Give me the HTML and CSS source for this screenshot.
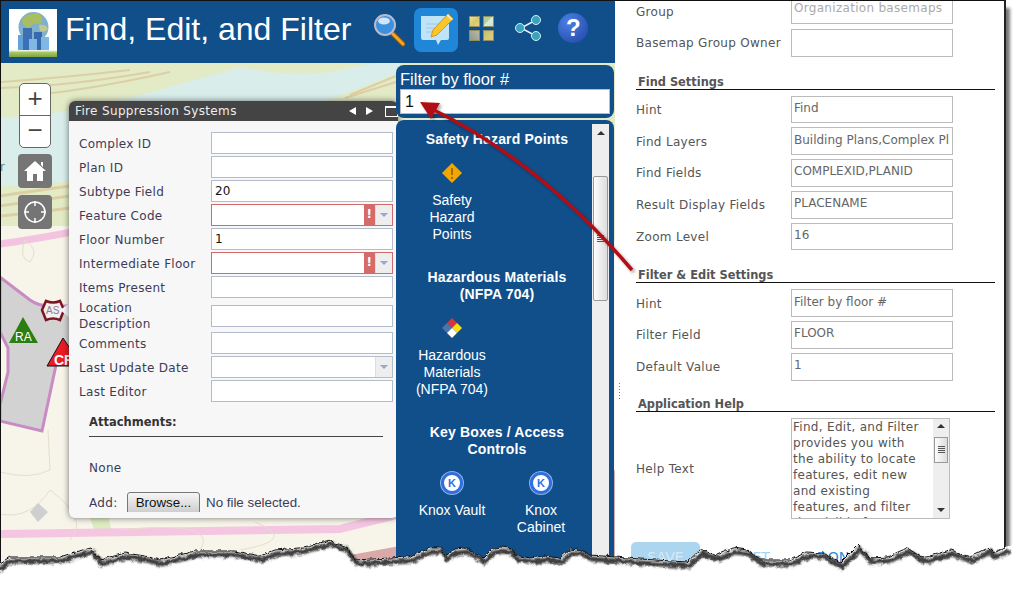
FILE: index.html
```html
<!DOCTYPE html>
<html lang="en">
<head>
    <meta charset="UTF-8">
    <title>Find, Edit, and Filter</title>
    <link rel="stylesheet" href="styles.css">
</head>
<body>
<div class="shot">
    <div class="app">
        <header class="app-header">
            <svg class="logo" width="48" height="48" viewBox="0 0 48 48">
                <defs>
                    <linearGradient id="grass" x1="0" y1="0" x2="0" y2="1">
                        <stop offset="0" stop-color="#fff"/>
                        <stop offset="0.35" stop-color="#a8c76a"/>
                        <stop offset="1" stop-color="#7fa63a"/>
                    </linearGradient>
                </defs>
                <rect width="48" height="48" fill="#fff"/>
                <circle cx="24.500" cy="18" r="15" fill="#7fb0cc"/>
                <path d="M13 10 Q20 3 30 4 Q36 10 31 15 Q24 13 20 19 Q13 18 13 10Z" fill="#a9bd62"/>
                <path d="M30 16 Q37 15 39 20 Q36 24 31 22Z" fill="#c3c98a"/>
                <rect x="9" y="26" width="8" height="15" fill="#62a3dc"/>
                <rect x="14" y="19" width="9" height="22" fill="#3d6fb5"/>
                <rect x="25" y="23" width="8" height="18" fill="#3868ae"/>
                <rect x="20" y="30" width="8" height="11" fill="#7fb8e4"/>
                <rect x="32" y="28" width="8" height="13" fill="#7fb8e4"/>
                <rect y="41" width="48" height="7" fill="url(#grass)"/>
            </svg>
            <h1 class="app-title">Find, Edit, and Filter</h1>
            <div class="tools">
                <svg class="tool-search" width="34" height="36" viewBox="0 0 34 36">
                    <line x1="20" y1="21" x2="30" y2="31" stroke="#8a5a20" stroke-width="5" stroke-linecap="round"/>
                    <line x1="20" y1="21" x2="30" y2="31" stroke="#f5a623" stroke-width="3" stroke-linecap="round"/>
                    <circle cx="12" cy="12" r="10" fill="#3d8fe0" stroke="#b9bcc8" stroke-width="2"/>
                    <ellipse cx="11" cy="8" rx="6" ry="3.500" fill="#cfe6fb"/>
                </svg>
                <div class="tool-active">
                    <svg width="36" height="36" viewBox="0 0 36 36">
                        <path d="M2 4 H28 Q30 4 30 6 V26 Q30 28 28 28 H22 L19 33 L17 28 H4 Q2 28 2 26Z" fill="#bfe4f8"/>
                        <path d="M7 12 H20 M7 16 H17 M7 20 H14" stroke="#9cc8e4" stroke-width="1"/>
                        <path d="M12 25 L14 18 L29 2 L34 7 L18 23Z" fill="#f8c52c" stroke="#d89a14" stroke-width="1"/>
                        <path d="M29 2 L34 7 L32.500 8.500 L27.500 3.500Z" fill="#f4e7c0"/>
                    </svg>
                </div>
                <div class="tool-tiles">
                    <span class="tile tile-a"></span><span class="tile tile-b"></span>
                    <span class="tile tile-c"></span><span class="tile tile-d"></span>
                </div>
                <svg class="tool-share" width="28" height="32" viewBox="0 0 28 32">
                    <path d="M21 7 L6 15 L21 23" stroke="#e8f2f6" stroke-width="1.500" fill="none"/>
                    <circle cx="21" cy="7" r="4.500" fill="#36a3bf" stroke="#d8eef4"/>
                    <circle cx="5" cy="15" r="4.500" fill="#36a3bf" stroke="#d8eef4"/>
                    <circle cx="21" cy="23" r="4.500" fill="#36a3bf" stroke="#d8eef4"/>
                </svg>
                <div class="tool-help">?</div>
            </div>
        </header>

        <div class="map">
            <svg class="basemap" viewBox="1 63 614 520" width="614" height="520">
                <rect x="0" y="60" width="620" height="530" fill="#f7f4ea"/>
                <path d="M0 60 H620 V240 H0Z" fill="#e3ebc6"/>
                <path d="M0 118 L60 112 L133 97 L242 67 Q290 78 330 72 L375 63 H400 V72 L337 97 L200 150 L69 182 L0 186Z" fill="#d9edea"/>
                <path d="M0 82 Q60 78 130 70 M0 88 Q70 86 150 72 M20 96 Q80 92 170 72 M350 95 L396 76 M345 98 L396 82" stroke="#dccfa6" stroke-width="2" fill="none"/>
                <path d="M0 196 Q40 190 70 186 M0 206 Q40 200 70 196 M0 216 Q40 212 70 208" stroke="#dccfa6" stroke-width="3" fill="none"/>
                <rect x="0" y="226" width="70" height="50" fill="#f7f4ea"/>
                <path d="M0 244 Q30 240 72 232" stroke="#f3c3e0" stroke-width="7" fill="none"/>
                <path d="M25 240 Q40 250 30 262 Q18 258 25 240Z" fill="none" stroke="#e4dfcc"/>
                <path d="M0 277 L30 300 Q38 306 50 306 H75 V340 L56 365 L42 431 L0 421 V405 L8 372 V348 L0 332Z" fill="#d2d2d2" stroke="#c88bc3" stroke-width="3"/>
                <path d="M90 518 L108 516 L112 532 L96 534Z" fill="#dcebc0"/>
                <path d="M0 534 L340 529 L400 514" stroke="#f5c6e2" stroke-width="8" fill="none"/>
                <path d="M0 472 Q30 480 50 470 L48 430 M0 514 Q30 520 50 490 Q90 520 70 540 M120 530 Q220 520 200 550 M255 522 Q300 540 240 550" stroke="#e4dfcc" fill="none"/>
                <path d="M345 556 L400 546 V565 H350Z" fill="#d9a8a8"/>
                <path d="M400 546 L616 470 V570 H400Z" fill="#d9a8a8"/>
                <path d="M30 512 L38 503 L48 512 L38 522Z" fill="#cfcfcf"/>
                <path d="M42 310 L46 301 Q53 304 60 301 L64 310 L60 320 Q53 317 46 320Z" fill="#f4eef0" stroke="#7a1620" stroke-width="2.500"/>
                <text x="46" y="314" class="map-as">AS</text>
                <path d="M60 310 L70 303 V318Z" fill="#f7f7f7"/>
                <path d="M23 317 L38 343 H9Z" fill="#2e7d10"/>
                <text x="15" y="341" class="map-ra">RA</text>
                <path d="M63 338 L82 366 H47Z" fill="#ea1c24" stroke="#111"/>
                <text x="54" y="365" class="map-cr">CR</text>
                <text x="0" y="171" class="map-label">r</text>
            </svg>

            <div class="zoom-ctl">
                <div class="zoom-btn">+</div>
                <div class="zoom-btn">&minus;</div>
            </div>
            <div class="map-btn map-btn-home">
                <svg width="24" height="22" viewBox="0 0 24 22">
                    <path d="M12 1 L23 11 H20 V21 H14 V14 H10 V21 H4 V11 H1Z M18 2 H20 V7 L18 5Z" fill="#fff"/>
                </svg>
            </div>
            <div class="map-btn map-btn-locate">
                <svg width="24" height="24" viewBox="0 0 24 24">
                    <circle cx="12" cy="12" r="10" fill="none" stroke="#fff" stroke-width="1.500"/>
                    <path d="M12 1 V6 M12 18 V23 M1 12 H6 M18 12 H23" stroke="#fff" stroke-width="1.500"/>
                </svg>
            </div>

            <section class="dialog">
                <div class="dialog-title">
                    <span class="dialog-name">Fire Suppression Systems</span>
                    <span class="arrow-left"></span>
                    <span class="arrow-right"></span>
                    <span class="maximize"></span>
                </div>
                <div class="dialog-body">
                    <div class="field"><label>Complex ID</label><input type="text"></div>
                    <div class="field"><label>Plan ID</label><input type="text"></div>
                    <div class="field"><label>Subtype Field</label><input type="text" value="20"></div>
                    <div class="field">
                        <label>Feature Code</label>
                        <div class="combo combo-error"><span class="combo-text"></span><span class="combo-warn">!</span><span class="combo-arrow"></span></div>
                    </div>
                    <div class="field"><label>Floor Number</label><input type="text" value="1"></div>
                    <div class="field">
                        <label>Intermediate Floor</label>
                        <div class="combo combo-error"><span class="combo-text"></span><span class="combo-warn">!</span><span class="combo-arrow"></span></div>
                    </div>
                    <div class="field"><label>Items Present</label><input type="text"></div>
                    <div class="field field-tall"><label>Location Description</label><input type="text"></div>
                    <div class="field"><label>Comments</label><input type="text"></div>
                    <div class="field">
                        <label>Last Update Date</label>
                        <div class="combo"><span class="combo-text"></span><span class="combo-arrow"></span></div>
                    </div>
                    <div class="field"><label>Last Editor</label><input type="text"></div>

                    <div class="attachments">
                        <div class="attach-title">Attachments:</div>
                        <div class="attach-none">None</div>
                        <div class="attach-add">
                            <span class="attach-label">Add:</span>
                            <button class="browse" type="button">Browse...</button>
                            <span class="attach-file">No file selected.</span>
                        </div>
                    </div>
                </div>
            </section>

            <div class="filter-box">
                <label class="filter-label">Filter by floor #</label>
                <input class="filter-input" type="text" value="1">
            </div>

            <aside class="template-panel">
                <div class="template-list">
                    <div class="group">
                        <h3>Safety Hazard Points</h3>
                        <div class="items">
                            <div class="item">
                                <svg width="22" height="22" viewBox="0 0 22 22">
                                    <path d="M11 1 L21 11 L11 21 L1 11Z" fill="#f5a500"/>
                                    <path d="M11 6 V13 M11 15 V17" stroke="#6b4a00" stroke-width="1.200"/>
                                </svg>
                                <span>Safety Hazard Points</span>
                            </div>
                        </div>
                    </div>
                    <div class="group">
                        <h3>Hazardous Materials (NFPA 704)</h3>
                        <div class="items">
                            <div class="item">
                                <svg width="22" height="22" viewBox="0 0 22 22">
                                    <path d="M11 1 L16 6 L11 11 L6 6Z" fill="#d8343c"/>
                                    <path d="M16 6 L21 11 L16 16 L11 11Z" fill="#f6e010"/>
                                    <path d="M6 6 L11 11 L6 16 L1 11Z" fill="#4f74ac"/>
                                    <path d="M11 11 L16 16 L11 21 L6 16Z" fill="#fff"/>
                                </svg>
                                <span>Hazardous Materials (NFPA 704)</span>
                            </div>
                        </div>
                    </div>
                    <div class="group">
                        <h3>Key Boxes / Access Controls</h3>
                        <div class="items">
                            <div class="item">
                                <div class="knox">K</div>
                                <span>Knox Vault</span>
                            </div>
                            <div class="item">
                                <div class="knox">K</div>
                                <span>Knox Cabinet</span>
                            </div>
                        </div>
                    </div>
                </div>
                <div class="scrollbar">
                    <div class="scroll-up"></div>
                    <div class="scroll-thumb"><span class="grip"></span></div>
                </div>
            </aside>
        </div>
    </div>

    <div class="config">
        <div class="grip-dots"></div>
        <div class="config-inner">
            <div class="row row-first">
                <label>Group</label>
                <input class="muted" type="text" value="Organization basemaps">
            </div>
            <div class="row"><label>Basemap Group Owner</label><input type="text"></div>

            <h2 class="heading">Find Settings</h2>
            <div class="row"><label>Hint</label><input type="text" value="Find"></div>
            <div class="row"><label>Find Layers</label><input type="text" value="Building Plans,Complex Pl"></div>
            <div class="row"><label>Find Fields</label><input type="text" value="COMPLEXID,PLANID"></div>
            <div class="row"><label>Result Display Fields</label><input type="text" value="PLACENAME"></div>
            <div class="row"><label>Zoom Level</label><input type="text" value="16"></div>

            <h2 class="heading">Filter &amp; Edit Settings</h2>
            <div class="row"><label>Hint</label><input type="text" value="Filter by floor #"></div>
            <div class="row"><label>Filter Field</label><input type="text" value="FLOOR"></div>
            <div class="row"><label>Default Value</label><input type="text" value="1"></div>

            <h2 class="heading heading-help">Application Help</h2>
            <div class="row row-help">
                <label>Help Text</label>
                <div class="help-box">
                    <p class="help-text">Find, Edit, and Filter provides you with the ability to locate features, edit new and existing features, and filter the visible features</p>
                    <div class="help-scroll">
                        <span class="help-up"></span>
                        <span class="help-thumb"><span class="grip"></span></span>
                        <span class="help-down"></span>
                    </div>
                </div>
            </div>

            <div class="actions">
                <span class="btn-save">SAVE</span>
                <span class="btn-reset">RESET</span>
                <span class="btn-done">DONE</span>
            </div>
        </div>
    </div>
</div>

<svg class="annotation" width="1021" height="589" viewBox="0 0 1021 589">
    <defs>
        <filter id="rough" filterUnits="userSpaceOnUse" x="-10" y="500" width="1040" height="100" color-interpolation-filters="sRGB">
            <feTurbulence type="fractalNoise" baseFrequency="0.18" numOctaves="2" seed="4"/>
            <feDisplacementMap in="SourceGraphic" scale="5" xChannelSelector="R" yChannelSelector="G"/>
        </filter>
        <filter id="soft" x="-5%" y="-50%" width="110%" height="200%">
            <feGaussianBlur stdDeviation="1"/>
        </filter>
        <filter id="arrow-shadow" x="-10%" y="-10%" width="120%" height="120%">
            <feDropShadow dx="2" dy="2" stdDeviation="1.500" flood-color="#000" flood-opacity="0.35"/>
        </filter>
    </defs>
    <g filter="url(#rough)">
        <path d="M-5 566 L10 557 L40 557 L60 557 L75 552 L90 548 L100 560 L125 553 L145 556 L160 560 L195 551 L235 551 L260 556 L275 550 L300 548 L330 540 L335 543 L345 546 L355 560 L390 558 L410 557 L415 554 L425 550 L430 548 L440 548 L445 555 L455 549 L465 548 L475 553 L482 558 L490 550 L500 547 L510 548 L515 555 L530 558 L545 556 L560 558 L570 549 L580 550 L590 555 L615 557 L640 559 L687 562 L700 550 L717 555 L733 548 L747 550 L760 560 L790 560 L807 552 L823 553 L840 563 L858 545 L870 558 L887 557 L907 548 L923 558 L950 550 L970 557 L988 548 L993 553 L1005 547 L1030 540 V600 H-5Z" fill="#fff"/>
        <path class="tear-shadow" filter="url(#soft)" transform="translate(2 4)" d="M-5 566 L10 557 L40 557 L60 557 L75 552 L90 548 L100 560 L125 553 L145 556 L160 560 L195 551 L235 551 L260 556 L275 550 L300 548 L330 540 L335 543 L345 546 L355 560 L390 558 L410 557 L415 554 L425 550 L430 548 L440 548 L445 555 L455 549 L465 548 L475 553 L482 558 L490 550 L500 547 L510 548 L515 555 L530 558 L545 556 L560 558 L570 549 L580 550 L590 555 L615 557 L640 559 L687 562 L700 550 L717 555 L733 548 L747 550 L760 560 L790 560 L807 552 L823 553 L840 563 L858 545 L870 558 L887 557 L907 548 L923 558 L950 550 L970 557 L988 548 L993 553 L1008 547"/>
        <path class="tear-line" d="M-5 566 L10 557 L40 557 L60 557 L75 552 L90 548 L100 560 L125 553 L145 556 L160 560 L195 551 L235 551 L260 556 L275 550 L300 548 L330 540 L335 543 L345 546 L355 560 L390 558 L410 557 L415 554 L425 550 L430 548 L440 548 L445 555 L455 549 L465 548 L475 553 L482 558 L490 550 L500 547 L510 548 L515 555 L530 558 L545 556 L560 558 L570 549 L580 550 L590 555 L615 557 L640 559 L687 562 L700 550 L717 555 L733 548 L747 550 L760 560 L790 560 L807 552 L823 553 L840 563 L858 545 L870 558 L887 557 L907 548 L923 558 L950 550 L970 557 L988 548 L993 553 L1005 547"/>
    </g>
    <g filter="url(#arrow-shadow)">
        <path d="M632 270 Q540 162 432 109" fill="none" stroke="#b10f14" stroke-width="3.500"/>
        <path d="M420 102 L440 103 L431 119Z" fill="#b10f14"/>
    </g>
</svg>
</body>
</html>
```

FILE: styles.css
```css
html, body {
    margin: 0;
    height: 100%;
    overflow: hidden;
    background: #fff;
}
body {
    font-family: "DejaVu Sans", sans-serif;
    font-size: 12px;
}
input {
    box-sizing: border-box;
    font-family: "DejaVu Sans", sans-serif;
    outline: none;
}
.shot {
    display: flex;
    box-sizing: border-box;
    width: 1006px;
    height: 575px;
    background: #fff;
    border-top: 1px solid #111;
    border-left: 1px solid #111;
    border-right: 2px solid #222;
    box-shadow: 4px 8px 3px #777;
}
.app {
    display: flex;
    flex-direction: column;
    width: 614px;
    flex-shrink: 0;
}
.app-header {
    display: flex;
    align-items: center;
    height: 62px;
    flex-shrink: 0;
    background: #114f8b;
}
.logo {
    margin-left: 8px;
    margin-top: 2px;
    flex-shrink: 0;
}
.app-title {
    margin: -6px 0 0 8px;
    color: #fff;
    font-family: "Liberation Sans", sans-serif;
    font-size: 32px;
    font-weight: normal;
    white-space: nowrap;
}
.tools {
    position: relative;
    flex: 1;
    height: 100%;
}
.tool-search, .tool-active, .tool-tiles, .tool-share, .tool-help {
    position: absolute;
}
.tool-search {
    left: 22px;
    top: 12px;
}
.tool-active {
    left: 63px;
    top: 7px;
    width: 44px;
    height: 44px;
    border-radius: 7px;
    background: #1f86d8;
}
.tool-active svg {
    margin: 4px 0 0 5px;
}
.tool-tiles {
    left: 118px;
    top: 15px;
    display: grid;
    grid-template-columns: 11px 11px;
    gap: 3px;
}
.tile {
    width: 11px;
    height: 11px;
    border: 1px solid #8f8f60;
    box-sizing: border-box;
}
.tile-a { background: linear-gradient(135deg, #f0e09a, #d8c66a 55%, #e8d98a); }
.tile-b { background: linear-gradient(135deg, #b7cf90 40%, #d4ecf0 50%, #cfe3c0); }
.tile-c { background: linear-gradient(45deg, #8f9a8a, #b9b8a4); }
.tile-d { background: linear-gradient(135deg, #b5c46a, #e2c47a 60%, #c9cf7c); }
.tool-share {
    left: 164px;
    top: 12px;
}
.tool-help {
    left: 207px;
    top: 12px;
    width: 30px;
    height: 30px;
    border-radius: 50%;
    background: radial-gradient(circle at 35% 30%, #4c80e4, #1d43a4);
    color: #fff;
    font-family: "Liberation Sans", sans-serif;
    font-size: 24px;
    font-weight: bold;
    line-height: 30px;
    text-align: center;
}

/* map and things floating on it */
.map {
    position: relative;
    flex: 1;
    overflow: hidden;
}
.basemap {
    display: block;
}
.map-as {
    font: 10px "Liberation Sans", sans-serif;
    fill: #8a8088;
}
.map-ra {
    font: 12px "Liberation Sans", sans-serif;
    fill: #fff;
}
.map-cr {
    font: bold 14px "Liberation Sans", sans-serif;
    fill: #fff;
}
.map-label {
    font: 12px "DejaVu Sans", sans-serif;
    fill: #6f8f9a;
}
.zoom-ctl {
    position: absolute;
    left: 18px;
    top: 20px;
    width: 32px;
    background: #fff;
    border: 1px solid #666;
    border-radius: 5px;
    box-sizing: border-box;
}
.zoom-btn {
    height: 31px;
    color: #444;
    font-family: "Liberation Sans", sans-serif;
    font-size: 26px;
    line-height: 29px;
    text-align: center;
}
.zoom-btn + .zoom-btn {
    border-top: 1px solid #666;
}
.map-btn {
    position: absolute;
    left: 17px;
    display: flex;
    align-items: center;
    justify-content: center;
    width: 34px;
    height: 34px;
    border-radius: 4px;
    background: #757575;
}
.map-btn-home { top: 91px; }
.map-btn-locate { top: 132px; }

.dialog {
    position: absolute;
    left: 68px;
    top: 38px;
    width: 329px;
    height: 417px;
    border-radius: 6px;
    background: #f7f7f7;
    box-shadow: 0 0 6px rgba(0, 0, 0, 0.55);
    overflow: hidden;
}
.dialog-title {
    display: flex;
    align-items: center;
    height: 20px;
    padding-left: 6px;
    background: #444;
    color: #eee;
}
.dialog-name {
    flex: 1;
    letter-spacing: 0.35px;
}
.arrow-left {
    width: 0;
    height: 0;
    border: 4px solid transparent;
    border-left: 0;
    border-right: 7px solid #fff;
}
.arrow-right {
    width: 0;
    height: 0;
    margin-left: 10px;
    border: 4px solid transparent;
    border-right: 0;
    border-left: 7px solid #fff;
}
.maximize {
    width: 11px;
    height: 8px;
    margin: 0 0 0 12px;
    border: 1px solid #fff;
    border-top-width: 2px;
}
.dialog-body {
    display: flex;
    flex-direction: column;
    gap: 2px;
    height: 391px;
    padding: 11px 4px 0 10px;
    color: #3c3c58;
    overflow: hidden;
    letter-spacing: 0.3px;
}
.field {
    display: grid;
    grid-template-columns: 132px 182px;
    align-items: center;
    height: 22px;
}
.field label {
    padding-top: 1px;
}
.field-tall {
    height: 30px;
}
.field-tall label {
    width: 110px;
    padding-top: 0;
    line-height: 16px;
}
.field input, .combo {
    box-sizing: border-box;
    width: 182px;
    height: 22px;
    padding: 0 3px;
    border: 1px solid #b4bccc;
    background: #fff;
    color: #111;
    font-size: 12px;
}
.combo {
    display: flex;
    padding: 0;
}
.combo-text {
    flex: 1;
}
.combo-error {
    border-color: #d16a6a;
}
.combo-warn {
    width: 11px;
    background: #d46a6a;
    color: #fff;
    font-weight: bold;
    line-height: 19px;
    text-align: center;
}
.combo-arrow {
    position: relative;
    width: 17px;
    background: #eee;
    border-left: 1px solid #ddd;
    box-sizing: border-box;
}
.combo-arrow::after {
    content: "";
    position: absolute;
    left: 4px;
    top: 8px;
    border: 4px solid transparent;
    border-bottom: 0;
    border-top: 4px solid #9aa8cc;
}
.attachments {
    width: 294px;
    margin: 10px 0 0 10px;
}
.attach-title {
    padding-bottom: 6px;
    border-bottom: 1px solid #444;
    font-size: 11.5px;
    font-weight: bold;
    line-height: 16px;
    color: #333;
    letter-spacing: 0;
}
.attach-none {
    margin-top: 23px;
    line-height: 16px;
}
.attach-add {
    display: flex;
    align-items: flex-start;
    height: 20px;
    margin-top: 16px;
    overflow: hidden;
}
.attach-label {
    width: 38px;
    line-height: 22px;
}
.browse {
    box-sizing: border-box;
    width: 73px;
    height: 24px;
    padding: 0 0 3px;
    border: 1px solid #777;
    border-radius: 3px;
    background: linear-gradient(#f6f6f6, #c8c8c8);
    color: #111;
    font: 13.33px "Liberation Sans", sans-serif;
}
.attach-file {
    margin-left: 6px;
    font: 13.33px/22px "Liberation Sans", sans-serif;
    letter-spacing: 0;
}

.filter-box {
    position: absolute;
    left: 395px;
    top: 2px;
    box-sizing: border-box;
    width: 218px;
    height: 53px;
    padding: 4px 4px 0;
    border-radius: 8px;
    background: #114f8b;
    color: #fff;
    font-family: "Liberation Sans", sans-serif;
}
.filter-label {
    display: block;
    font-size: 16.5px;
    line-height: 20px;
}
.filter-input {
    display: block;
    width: 210px;
    height: 25px;
    padding: 0 4px;
    border: 1px solid #bbb;
    font: 16px "Liberation Sans", sans-serif;
    color: #111;
}
.template-panel {
    position: absolute;
    left: 395px;
    top: 57px;
    display: flex;
    width: 218px;
    height: 480px;
    padding: 4px 5px 0 0;
    box-sizing: border-box;
    border-radius: 8px 8px 0 0;
    background: #114f8b;
    color: #fff;
    font-family: "Liberation Sans", sans-serif;
}
.template-list {
    flex: 1;
    padding-top: 7px;
    overflow: hidden;
}
.group {
    margin-bottom: 26px;
}
.group h3 {
    width: 170px;
    margin: 0 0 14px 16px;
    font-size: 14px;
    line-height: 17px;
    letter-spacing: 0.15px;
    text-align: center;
}
.items {
    display: flex;
    gap: 13px;
    padding-left: 18px;
}
.item {
    display: flex;
    flex-direction: column;
    align-items: center;
    width: 76px;
    font-size: 14px;
    line-height: 17px;
    text-align: center;
}
.item svg {
    flex-shrink: 0;
    margin-bottom: 8px;
}
.knox {
    flex-shrink: 0;
    box-sizing: border-box;
    width: 22px;
    height: 22px;
    margin-bottom: 8px;
    border: 3px solid #2f6fe0;
    border-radius: 50%;
    background: #fff;
    box-shadow: 0 0 0 1px #8fb0ea;
    color: #2f6fe0;
    font-size: 11px;
    font-weight: bold;
    line-height: 16px;
}
.scrollbar {
    position: relative;
    width: 17px;
    background: #eee;
    flex-shrink: 0;
}
.scroll-up {
    position: absolute;
    left: 5px;
    top: 7px;
    border: 4px solid transparent;
    border-top: 0;
    border-bottom: 4px solid #333;
}
.scroll-thumb {
    position: absolute;
    left: 1px;
    top: 52px;
    display: flex;
    align-items: center;
    justify-content: center;
    box-sizing: border-box;
    width: 15px;
    height: 125px;
    border: 1px solid #999;
    border-radius: 2px;
    background: linear-gradient(90deg, #fdfdfd, #ddd);
}
.grip {
    width: 7px;
    height: 7px;
    background: repeating-linear-gradient(#555 0, #555 1px, transparent 1px, transparent 2px);
}

/* settings panel on the right */
.config {
    position: relative;
    flex: 1;
    overflow: hidden;
    color: #555;
}
.grip-dots {
    position: absolute;
    left: 4px;
    top: 382px;
    width: 1px;
    height: 17px;
    background: repeating-linear-gradient(#777 0, #777 1px, transparent 1px, transparent 3px);
}
.config-inner {
    width: 359px;
    margin: -5px 0 0 21px;
}
.row {
    display: grid;
    grid-template-columns: 155px 162px;
    align-items: center;
    height: 27.75px;
    margin-bottom: 4px;
}
.row label {
    padding-top: 1px;
    letter-spacing: 0.3px;
}
.row-first {
    margin-bottom: 5px;
}
.row-first label {
    padding-top: 4px;
}
.row input {
    width: 162px;
    height: 27.75px;
    padding: 0 2px 3px;
    border: 1px solid #bbb;
    background: #fff;
    color: #666;
    font-size: 12px;
}
.row input.muted {
    padding-bottom: 4px;
    color: #aaa;
    letter-spacing: 0.3px;
}
.heading {
    margin: 16px 0 6px;
    padding: 2px 0 0 2px;
    border-bottom: 1px solid #111;
    color: #555;
    font-size: 11.4px;
    font-weight: bold;
    line-height: 14px;
}
.heading-help {
    margin-top: 14px;
}
.row-help {
    height: 101px;
    margin-bottom: 23px;
}
.help-box {
    display: flex;
    box-sizing: border-box;
    width: 159px;
    height: 101px;
    border: 1px solid #bbb;
    overflow: hidden;
}
.help-text {
    flex: 1;
    margin: 0 6px 0 1px;
    font-size: 12px;
    line-height: 16px;
    letter-spacing: 0.3px;
    color: #555;
}
.help-scroll {
    position: relative;
    width: 16px;
    flex-shrink: 0;
    background: #eee;
}
.help-up, .help-down {
    position: absolute;
    left: 4px;
    border: 4px solid transparent;
}
.help-up {
    top: 5px;
    border-top: 0;
    border-bottom: 4px solid #333;
}
.help-down {
    bottom: 6px;
    border-bottom: 0;
    border-top: 4px solid #333;
}
.help-thumb {
    position: absolute;
    left: 1px;
    top: 18px;
    display: flex;
    align-items: center;
    justify-content: center;
    box-sizing: border-box;
    width: 14px;
    height: 26px;
    border: 1px solid #999;
    background: linear-gradient(90deg, #fdfdfd, #ddd);
}
.actions {
    display: flex;
    align-items: center;
    height: 30px;
    margin-left: -5px;
    font-size: 14px;
}
.btn-save {
    box-sizing: border-box;
    width: 69px;
    height: 30px;
    border-radius: 5px;
    background: #acd5ef;
    color: #d6eaf7;
    line-height: 30px;
    text-align: center;
}
.btn-reset {
    margin-left: 25px;
    color: #a8d2ee;
}
.btn-done {
    margin-left: 47px;
    color: #2a8fdc;
}

.annotation {
    position: absolute;
    left: 0;
    top: 0;
    pointer-events: none;
}
.tear-shadow {
    fill: none;
    stroke: #3a3a3a;
    stroke-width: 5;
}
.tear-line {
    fill: none;
    stroke: #111;
    stroke-width: 1;
}
```
